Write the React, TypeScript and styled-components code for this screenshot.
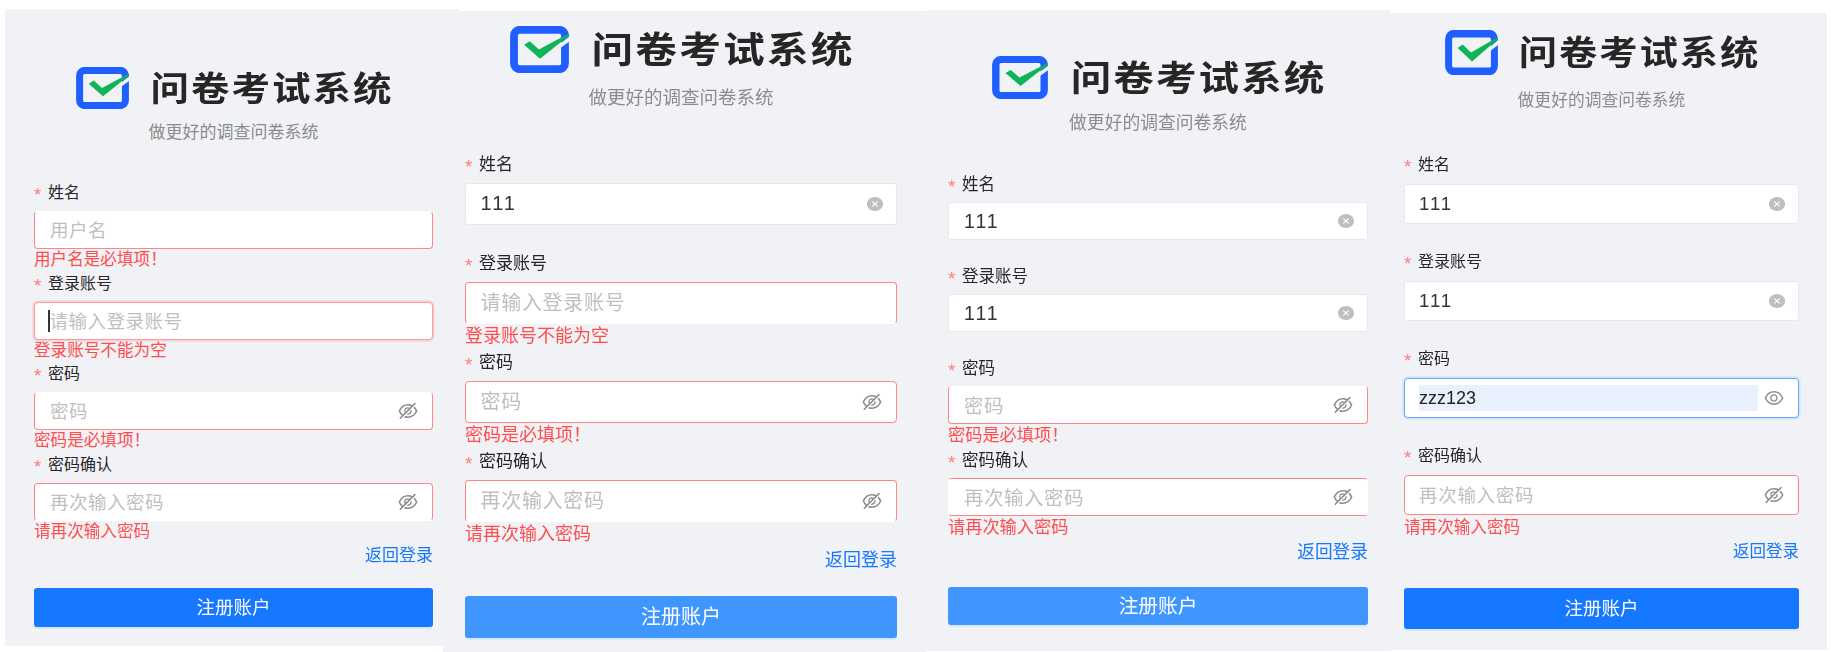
import React from 'react'
import styled, { createGlobalStyle } from 'styled-components'
import { AiFillCloseCircle, AiOutlineEye, AiOutlineEyeInvisible } from 'react-icons/ai'

const GlobalStyle = createGlobalStyle`
  html, body {
    margin: 0;
    padding: 0;
    background: #fff;
    overflow: hidden;
  }
  * {
    box-sizing: border-box;
  }
`

type Metrics = {
  width: number
  top: number
  height: number
  overlap: number
  padLeft: number
  padRight: number
  padTop: number
  logoW: number
  logoH: number
  logoGap: number
  titleChar: number
  subSize: number
  subGap: number
  formGap: number
  pitch: number
  labelSize: number
  labelGap: number
  inputH: number
  inputPad: number
  inputSize: number
  inputTrack: number
  errorSize: number
  errorH: number
  linkSize: number
  buttonGap: number
  buttonH: number
  buttonSize: number
  buttonColor: string
}

const Page = styled.div`
  display: flex;
  align-items: flex-start;
  width: 1831px;
  height: 652px;
  padding-left: 5px;
  overflow: hidden;
  font-family: 'Noto Sans CJK SC', 'Noto Sans', sans-serif;
  filter: blur(0.45px);
`

const Panel = styled.section<{ $m: Metrics }>`
  flex: none;
  width: ${({ $m }) => $m.width}px;
  height: ${({ $m }) => $m.height}px;
  margin-top: ${({ $m }) => $m.top}px;
  margin-left: ${({ $m }) => -$m.overlap}px;
  padding: ${({ $m }) => $m.padTop}px ${({ $m }) => $m.padRight}px 0 ${({ $m }) => $m.padLeft}px;
  background: #f0f2f5;
`

const Brand = styled.div<{ $m: Metrics }>`
  display: flex;
  align-items: center;
  justify-content: center;
  gap: ${({ $m }) => $m.logoGap}px;
  height: ${({ $m }) => $m.logoH}px;
`

const Logo = styled.svg<{ $m: Metrics }>`
  flex: none;
  width: ${({ $m }) => $m.logoW}px;
  height: ${({ $m }) => $m.logoH}px;
`

const Title = styled.h1<{ $m: Metrics }>`
  margin: 0;
  padding-bottom: 3px;
  font-size: ${({ $m }) => $m.titleChar * 0.97}px;
  letter-spacing: ${({ $m }) => $m.titleChar * 0.05}px;
  margin-right: ${({ $m }) => -$m.titleChar * 0.05}px;
  line-height: 1;
  font-weight: 700;
  color: #262626;
  white-space: nowrap;
  transform: scaleY(0.88);
`

const Subtitle = styled.p<{ $m: Metrics }>`
  margin: ${({ $m }) => $m.subGap}px 0 ${({ $m }) => $m.formGap}px;
  height: 20px;
  padding-bottom: 2px;
  line-height: 18px;
  font-size: ${({ $m }) => $m.subSize}px;
  text-align: center;
  color: #8c8c8c;
  white-space: nowrap;
`

const Field = styled.div<{ $m: Metrics }>`
  height: ${({ $m }) => $m.pitch}px;
`

const Label = styled.label<{ $m: Metrics }>`
  display: flex;
  align-items: center;
  gap: 5px;
  height: 20px;
  padding-bottom: 3px;
  margin-bottom: ${({ $m }) => $m.labelGap}px;
  font-size: ${({ $m }) => $m.labelSize}px;
  color: #262626;
`

const Star = styled.span`
  width: 9px;
  font-family: 'Liberation Sans', sans-serif;
  font-size: 19px;
  line-height: 20px;
  padding-top: 8px;
  color: #ff7c7e;
`

type Edge = 'plain' | 'error' | 'noTop' | 'noBottom' | 'lines' | 'focus' | 'errorFocus'

const edgeCss: Record<Edge, string> = {
  plain: 'border-color: #e7e8ea; border-radius: 3px;',
  error: 'border-color: #ff8587;',
  noTop: 'border-color: #fff #ff8587 #ff8587;',
  noBottom: 'border-color: #ff8587 #ff8587 #fff;',
  lines: 'border-color: #ff8587 #fff;',
  focus: 'border-color: #69a8ff; box-shadow: 0 0 0 1.5px rgba(5, 145, 255, 0.15);',
  errorFocus: 'border-color: #ff9c9e; box-shadow: 0 0 0 1.5px rgba(255, 77, 79, 0.2);',
}

const InputBox = styled.div<{ $m: Metrics; $edge: Edge }>`
  display: flex;
  align-items: center;
  height: ${({ $m }) => $m.inputH}px;
  padding: 0 13px 0 ${({ $m }) => $m.inputPad}px;
  font-size: ${({ $m }) => $m.inputSize}px;
  letter-spacing: ${({ $m }) => $m.inputTrack}px;
  background: #fff;
  border: 1.5px solid;
  border-radius: 4px;
  ${({ $edge }) => edgeCss[$edge]}
`

const InputText = styled.span<{ $muted?: boolean }>`
  flex: 1;
  padding-bottom: 2px;
  white-space: nowrap;
  color: ${({ $muted }) => ($muted ? '#bfbfbf' : '#333')};
`

const Digits = styled(InputText)`
  padding-bottom: 0;
  font-family: 'Liberation Sans', sans-serif;
  letter-spacing: 2px;
`

const Autofilled = styled.span`
  flex: 1;
  display: flex;
  align-items: center;
  height: 26px;
  margin-right: 5px;
  font-family: 'Liberation Sans', sans-serif;
  font-size: 18px;
  letter-spacing: 0;
  color: #222;
  background: #e8f0fe;
  border-radius: 2px;
`

const Caret = styled.span`
  flex: none;
  width: 1.5px;
  height: 22px;
  margin-left: -2px;
  background: #333;
`

const ClearIcon = styled(AiFillCloseCircle)`
  flex: none;
  width: 16px;
  height: 16px;
  color: #bfbfbf;
  transform: scaleX(1.15);
`

const EyeOff = styled(AiOutlineEyeInvisible)`
  flex: none;
  width: 22px;
  height: 22px;
  color: #8c8c8c;
`

const EyeOn = styled(AiOutlineEye)`
  flex: none;
  width: 22px;
  height: 22px;
  color: #8c8c8c;
`

const ErrorText = styled.div<{ $m: Metrics }>`
  height: ${({ $m }) => $m.errorH}px;
  padding-bottom: 3px;
  line-height: ${({ $m }) => $m.errorH - 3}px;
  font-size: ${({ $m }) => $m.errorSize}px;
  color: #ff4d4f;
  white-space: nowrap;
`

const BackLink = styled.a<{ $m: Metrics }>`
  display: block;
  height: 20px;
  padding-bottom: 3px;
  line-height: 17px;
  text-align: right;
  font-size: ${({ $m }) => $m.linkSize}px;
  color: #1677ff;
`

const SubmitButton = styled.button<{ $m: Metrics }>`
  display: block;
  width: 100%;
  height: ${({ $m }) => $m.buttonH}px;
  margin-top: ${({ $m }) => $m.buttonGap}px;
  padding: 0 0 3px;
  font-family: inherit;
  font-size: ${({ $m }) => $m.buttonSize}px;
  color: #fff;
  background: ${({ $m }) => $m.buttonColor};
  border: 0;
  border-radius: 3px;
  box-shadow: 0 2px 0 rgba(5, 145, 255, 0.1);
`

type FieldData = {
  label: string
  placeholder: string
  value?: string
  kind: 'text' | 'password' | 'revealed'
  edge: Edge
  error?: string
  caret?: boolean
}

const panels: { metrics: Metrics; fields: FieldData[] }[] = [
  {
    metrics: {
      width: 455, top: 9, height: 637, overlap: 0, padLeft: 29, padRight: 27, padTop: 58,
      logoW: 53, logoH: 42, logoGap: 22, titleChar: 39.7, subSize: 17, subGap: 13, formGap: 40.7,
      pitch: 90.5, labelSize: 16, labelGap: 8.5, inputH: 38, inputPad: 15, inputSize: 18.5, inputTrack: 0.5,
      errorSize: 16.6, errorH: 22, linkSize: 17, buttonGap: 23.5, buttonH: 39, buttonSize: 18.5,
      buttonColor: '#1677ff',
    },
    fields: [
      { label: '姓名', placeholder: '用户名', kind: 'text', edge: 'noTop', error: '用户名是必填项！' },
      { label: '登录账号', placeholder: '请输入登录账号', kind: 'text', edge: 'errorFocus', error: '登录账号不能为空', caret: true },
      { label: '密码', placeholder: '密码', kind: 'password', edge: 'noTop', error: '密码是必填项！' },
      { label: '密码确认', placeholder: '再次输入密码', kind: 'password', edge: 'noBottom', error: '请再次输入密码' },
    ],
  },
  {
    metrics: {
      width: 483, top: 11, height: 641, overlap: 17, padLeft: 22, padRight: 29, padTop: 15,
      logoW: 59, logoH: 47, logoGap: 23, titleChar: 43, subSize: 18.5, subGap: 14, formGap: 47,
      pitch: 99, labelSize: 17, labelGap: 9, inputH: 41.5, inputPad: 14.5, inputSize: 20, inputTrack: 0.7,
      errorSize: 18, errorH: 24, linkSize: 18, buttonGap: 26, buttonH: 42, buttonSize: 20,
      buttonColor: '#4096ff',
    },
    fields: [
      { label: '姓名', placeholder: '', value: '111', kind: 'text', edge: 'plain' },
      { label: '登录账号', placeholder: '请输入登录账号', kind: 'text', edge: 'noBottom', error: '登录账号不能为空' },
      { label: '密码', placeholder: '密码', kind: 'password', edge: 'error', error: '密码是必填项！' },
      { label: '密码确认', placeholder: '再次输入密码', kind: 'password', edge: 'noBottom', error: '请再次输入密码' },
    ],
  },
  {
    metrics: {
      width: 464, top: 10, height: 641, overlap: 0, padLeft: 22, padRight: 22, padTop: 46,
      logoW: 56, logoH: 43, logoGap: 23, titleChar: 41.8, subSize: 17.8, subGap: 13, formGap: 42,
      pitch: 92, labelSize: 16.5, labelGap: 8, inputH: 38, inputPad: 15, inputSize: 19.5, inputTrack: 0.5,
      errorSize: 17.2, errorH: 22, linkSize: 17.7, buttonGap: 25, buttonH: 38, buttonSize: 19.7,
      buttonColor: '#4096ff',
    },
    fields: [
      { label: '姓名', placeholder: '', value: '111', kind: 'text', edge: 'plain' },
      { label: '登录账号', placeholder: '', value: '111', kind: 'text', edge: 'plain' },
      { label: '密码', placeholder: '密码', kind: 'password', edge: 'noTop', error: '密码是必填项！' },
      { label: '密码确认', placeholder: '再次输入密码', kind: 'password', edge: 'lines', error: '请再次输入密码' },
    ],
  },
  {
    metrics: {
      width: 437, top: 13, height: 637, overlap: 0, padLeft: 14, padRight: 28, padTop: 17,
      logoW: 53, logoH: 45, logoGap: 21, titleChar: 39.5, subSize: 16.8, subGap: 15, formGap: 44,
      pitch: 97, labelSize: 16, labelGap: 10, inputH: 40, inputPad: 14, inputSize: 18.5, inputTrack: 0.7,
      errorSize: 16.6, errorH: 25, linkSize: 16.5, buttonGap: 26, buttonH: 41, buttonSize: 18.5,
      buttonColor: '#1677ff',
    },
    fields: [
      { label: '姓名', placeholder: '', value: '111', kind: 'text', edge: 'plain' },
      { label: '登录账号', placeholder: '', value: '111', kind: 'text', edge: 'plain' },
      { label: '密码', placeholder: '', value: 'zzz123', kind: 'revealed', edge: 'focus' },
      { label: '密码确认', placeholder: '再次输入密码', kind: 'password', edge: 'error', error: '请再次输入密码' },
    ],
  },
]

const LogoMark: React.FC<{ m: Metrics }> = ({ m }) => (
  <Logo $m={m} viewBox="0 0 53 42" preserveAspectRatio="none">
    <rect x="3.6" y="3.4" width="45.8" height="35.2" rx="5" fill="none" stroke="#1f5fff" strokeWidth="7" />
    <polygon points="38,21 53,9.5 53,14 38,25" fill="#f0f2f5" />
    <polygon points="12.7,16.7 17.7,13.6 26,21 53,6.6 53,8.4 27,29.3" fill="#0fb457" />
  </Logo>
)

const FormField: React.FC<{ m: Metrics; field: FieldData }> = ({ m, field }) => (
  <Field $m={m}>
    <Label $m={m}>
      <Star>*</Star>
      {field.label}
    </Label>
    <InputBox $m={m} $edge={field.edge}>
      {field.caret && <Caret />}
      {field.kind === 'revealed' ? (
        <Autofilled>{field.value}</Autofilled>
      ) : field.value ? (
        <Digits>{field.value}</Digits>
      ) : (
        <InputText $muted>{field.placeholder}</InputText>
      )}
      {field.kind === 'text' && field.value && <ClearIcon />}
      {field.kind === 'password' && <EyeOff />}
      {field.kind === 'revealed' && <EyeOn />}
    </InputBox>
    {field.error && <ErrorText $m={m}>{field.error}</ErrorText>}
  </Field>
)

const App: React.FC = () => (
  <Page>
    <GlobalStyle />
    {panels.map(({ metrics, fields }, i) => (
      <Panel key={i} $m={metrics}>
        <Brand $m={metrics}>
          <LogoMark m={metrics} />
          <Title $m={metrics}>问卷考试系统</Title>
        </Brand>
        <Subtitle $m={metrics}>做更好的调查问卷系统</Subtitle>
        {fields.map((field) => (
          <FormField key={field.label} m={metrics} field={field} />
        ))}
        <BackLink $m={metrics}>返回登录</BackLink>
        <SubmitButton $m={metrics}>注册账户</SubmitButton>
      </Panel>
    ))}
  </Page>
)

export default App
